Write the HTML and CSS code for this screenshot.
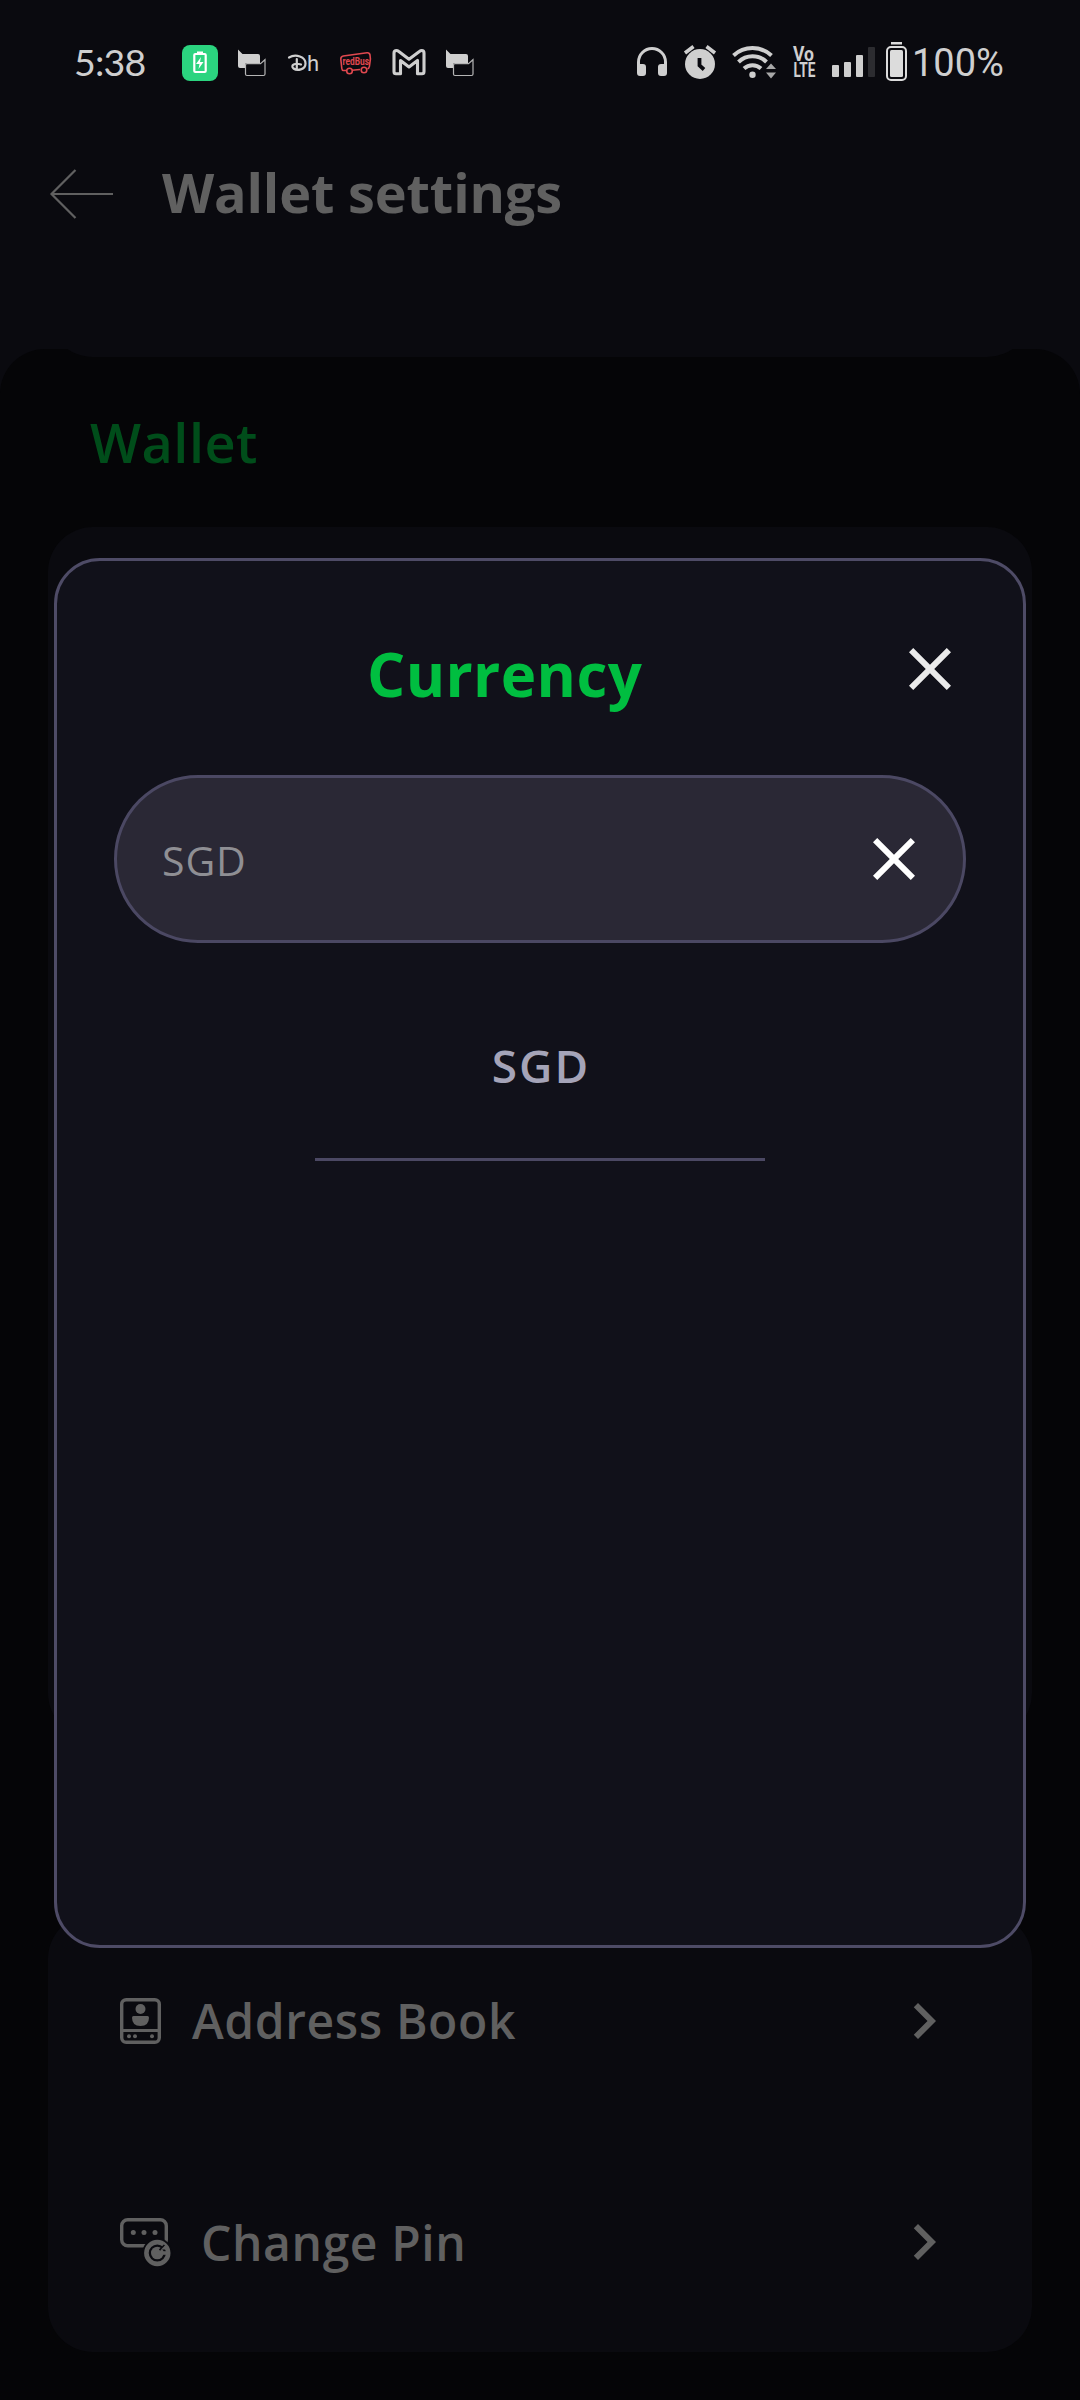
FILE: index.html
```html
<!DOCTYPE html>
<html lang="en">
<head>
<meta charset="utf-8">
<title>Wallet settings</title>
<link rel="stylesheet" href="styles.css">
</head>
<body>
<div class="screen">
  <div class="status">
    <span class="clock">5:38</span>
    <div class="status-left">
      <svg width="36" height="40" viewBox="0 0 36 40"><rect y="3" width="36" height="36" rx="8" fill="#2bd47f"/><rect x="12.300" y="12" width="11.400" height="18" rx="1" fill="none" stroke="#fff" stroke-width="2.200"/><rect x="15" y="9.500" width="6" height="3" fill="#fff"/><path d="M19 15l-5 7h3.500l-1 5 5-7H18z" fill="#fff"/></svg>
      <svg class="chat" width="28" height="40" viewBox="0 0 28 40"><path d="M0 7.500l4.500 4.500H20q2 0 2 2v7H9q-2 0-2 2v3H2q-2 0-2-2z" fill="#cfcfcf"/><path d="M9 21.700h13.500l4.500-4V32q0 1.500-1.500 1.500H9q-1.500 0-1.500-1.500v-9q0-1.300 1.500-1.300z" fill="#0a0a0f" stroke="#b5b5b5" stroke-width="1.200"/></svg>
      <svg width="32" height="40" viewBox="0 0 32 40"><path d="M1 15.500C8 11.500 17.500 15 17.500 21.500C17.500 28 9 29 5.500 26.500C2 23 7 20.500 13 22.500M8.800 17v11" fill="none" stroke="#cfcfcf" stroke-width="2.200" stroke-linecap="round"/><text x="19" y="28.800" class="logo-h">h</text></svg>
      <svg width="32" height="40" viewBox="0 0 32 40"><path d="M7 28.500H3.500q-1.500 0-1.700-2L.8 17q0-2.500 2.500-3L27 10.800q2.500-.3 3 2.200l.4 4-1 7.500q-.3 2-2 2.200M12 28.300l8-.8" fill="none" stroke="#e0484f" stroke-width="1.600"/><circle cx="9.500" cy="29" r="2.800" fill="none" stroke="#e0484f" stroke-width="1.600"/><circle cx="24" cy="28" r="2.800" fill="none" stroke="#e0484f" stroke-width="1.600"/><text x="2.500" y="22.500" class="logo-bus" textLength="26.500" lengthAdjust="spacingAndGlyphs">redBus</text></svg>
      <svg width="34" height="40" viewBox="0 0 34 40"><path d="M2 11V29.500q0 2.300 2 2.300h4.500V18.500L17 25l8.500-6.500v13.300H30q2 0 2-2.300V11q0-2.500-2.300-2.500-1 0-2 .8L17 17.200 6.500 9.300Q5.500 8.500 4.500 8.500 2 8.500 2 11z" fill="none" stroke="#cfcfcf" stroke-width="3.100" stroke-linejoin="round"/></svg>
      <svg class="chat" width="28" height="40" viewBox="0 0 28 40"><path d="M0 7.500l4.500 4.500H20q2 0 2 2v7H9q-2 0-2 2v3H2q-2 0-2-2z" fill="#cfcfcf"/><path d="M9 21.700h13.500l4.500-4V32q0 1.500-1.500 1.500H9q-1.500 0-1.500-1.500v-9q0-1.300 1.500-1.300z" fill="#0a0a0f" stroke="#b5b5b5" stroke-width="1.200"/></svg>
    </div>
    <div class="status-right">
      <svg width="30" height="40" viewBox="637 42 30 40"><path d="M638.500 68v-6a13.500 13.500 0 0 1 27 0v6" fill="none" stroke="#cfcfcf" stroke-width="3"/><path d="M637 64h6q3 0 3 3v6q0 3-3 3h-3q-3 0-3-3zM667 64h-6q-3 0-3 3v6q0 3 3 3h3q3 0 3-3z" fill="#cfcfcf"/></svg>
      <svg width="32" height="40" viewBox="684 42 32 40"><circle cx="700" cy="64" r="15" fill="#cfcfcf"/><path d="M685 53l8.500-6.500M715 53l-8.500-6.500" stroke="#cfcfcf" stroke-width="3.600"/><path d="M699.500 58v7.500l4.500 4" fill="none" stroke="#0a0a0f" stroke-width="3.800"/></svg>
      <svg width="44" height="40" viewBox="732 42 44 40"><g fill="none" stroke="#cfcfcf" stroke-width="4"><path d="M733.500 55.500a28 28 0 0 1 38 0"/><path d="M738.500 62a20 20 0 0 1 28 0"/><path d="M744 68.500a12.500 12.500 0 0 1 17 0"/></g><circle cx="752.500" cy="74.800" r="3.200" fill="#cfcfcf"/><path d="M766 69l5-5.500 5 5.500zM766 72.500h10l-5 6z" fill="#a8a8a8"/></svg>
      <svg width="23" height="40" viewBox="0 0 23 40"><text x="0" y="19.300" class="volte" textLength="21" lengthAdjust="spacingAndGlyphs">Vo</text><text x="0.500" y="35" class="volte" textLength="22" lengthAdjust="spacingAndGlyphs">LTE</text></svg>
      <svg width="43" height="40" viewBox="832 42 43 40"><g fill="#cfcfcf"><rect x="832" y="65" width="7" height="12" rx="1"/><rect x="844" y="62" width="7" height="15" rx="1"/><rect x="856" y="55" width="7" height="22" rx="1"/></g><rect x="868" y="47" width="7" height="30" rx="1" fill="#2c2c30"/></svg>
      <svg width="21" height="40" viewBox="0 0 21 40"><rect x="5" y="0" width="11" height="2.500" fill="#dcdcdc"/><rect x="1" y="5" width="19" height="33" rx="4" fill="none" stroke="#dcdcdc" stroke-width="2"/><rect x="4" y="8" width="13" height="27" rx="1.500" fill="#dcdcdc"/></svg>
    </div>
    <span class="percent">100%</span>
  </div>

  <header class="header">
    <svg width="64" height="50" viewBox="0 0 64 50" fill="none" stroke="#606060" stroke-width="2.200"><path d="M25.500 1L1.500 25l24 24M1.500 25H63"/></svg>
    <h1>Wallet settings</h1>
  </header>

  <main class="content">
    <div class="header-edge"></div>
    <h2>Wallet</h2>
    <section class="card card-general"></section>
    <section class="card card-security">
      <div class="row">
        <svg width="41" height="46" viewBox="0 0 41 46"><rect x="1.700" y="1.700" width="37.600" height="42.600" rx="4.500" fill="none" stroke="#606060" stroke-width="3.400"/><path d="M2 32.500h37" stroke="#606060" stroke-width="3"/><g fill="#606060"><circle cx="20.500" cy="11" r="5"/><path d="M12 19.500q0-1.500 1.500-1.500h14q1.500 0 1.500 1.500 0 8.500-8.500 8.500T12 19.500z"/><circle cx="9" cy="38.300" r="2"/><circle cx="15" cy="38.300" r="2"/><circle cx="32" cy="38.300" r="2"/></g></svg>
        <span class="address">Address Book</span>
        <svg class="chevron" width="72" height="72" viewBox="0 0 24 24"><path d="M10 6L8.590 7.410 13.170 12l-4.580 4.590L10 18l6-6z" fill="#606060"/></svg>
      </div>
      <div class="row">
        <svg width="51" height="50" viewBox="0 0 51 50"><rect x="1.700" y="2.700" width="44.600" height="26" rx="6" fill="none" stroke="#606060" stroke-width="3.400"/><g fill="#606060"><circle cx="13.300" cy="15.500" r="2.500"/><circle cx="24" cy="15.500" r="2.500"/><circle cx="35" cy="15.500" r="2.500"/></g><circle cx="37.300" cy="36" r="15" fill="#0a0a0f"/><circle cx="37.300" cy="36" r="10.900" fill="none" stroke="#606060" stroke-width="4.600"/><circle cx="37.300" cy="36" r="6.300" fill="#606060"/><path d="M37 36h12" stroke="#606060" stroke-width="3.600"/><path d="M39.500 33.200l5-5" stroke="#0a0a0f" stroke-width="1.800"/><path d="M41 32.500h5v-5z" fill="#606060"/></svg>
        <span class="pin">Change Pin</span>
        <svg class="chevron" width="72" height="72" viewBox="0 0 24 24"><path d="M10 6L8.590 7.410 13.170 12l-4.580 4.590L10 18l6-6z" fill="#606060"/></svg>
      </div>
    </section>
  </main>

  <div class="modal" role="dialog">
    <div class="modal-head">
      <h3>Currency</h3>
      <svg width="72" height="72" viewBox="0 0 24 24"><path d="M19 6.410L17.590 5 12 10.590 6.410 5 5 6.410 10.590 12 5 17.590 6.410 19 12 13.410 17.590 19 19 17.590 13.410 12z" fill="#ebebeb"/></svg>
    </div>
    <div class="search">
      <span>SGD</span>
      <svg width="72" height="72" viewBox="0 0 24 24"><path d="M19 6.410L17.590 5 12 10.590 6.410 5 5 6.410 10.590 12 5 17.590 6.410 19 12 13.410 17.590 19 19 17.590 13.410 12z" fill="#fff"/></svg>
    </div>
    <div class="option">SGD</div>
  </div>
</div>
</body>
</html>
```
FILE: styles.css
```css
* { box-sizing: border-box; }
body { margin: 0; background: #0a0a0f; font-family: "Open Sans", sans-serif; }
h1, h2, h3 { margin: 0; white-space: nowrap; }
svg { display: block; flex: none; overflow: visible; }

.screen { position: relative; width: 1080px; height: 2400px; overflow: hidden; display: flex; flex-direction: column; }

.status { display: flex; align-items: center; height: 124px; padding-left: 74px; color: #cfcfcf; font: 400 38px/40px Roboto, sans-serif; }
.clock { width: 108px; font-family: Lato, sans-serif; font-size: 37.5px; letter-spacing: -0.8px; }
.percent { padding-top: 1px; }
.status-left { display: flex; width: 455px; }
.status-left svg { margin-right: 20px; }
.status-left .chat { margin-right: 22px; }
.status-right { display: flex; width: 275px; }
.status-right svg { margin-right: 17px; }
.status-right svg:nth-child(2) { margin-right: 16px; }
.status-right svg:nth-child(4) { margin-right: 16px; }
.status-right svg:nth-child(5) { margin-right: 11px; }
.status-right svg:last-child { margin-right: 0; }
.logo-h { font: 400 22px Roboto, sans-serif; fill: #cfcfcf; }
.logo-bus { font: 700 10px Roboto, sans-serif; fill: #e0484f; }
.volte { font: 700 20.5px Roboto, sans-serif; fill: #cfcfcf; }

.header { display: flex; align-items: center; height: 140px; margin-bottom: 85px; padding-left: 50px; gap: 48px; }
.header h1 { padding-bottom: 4px; font-size: 54px; font-weight: 700; line-height: 74px; letter-spacing: -0.15px; color: #606060; }

.content { flex: 1; background: #050507; border-radius: 45px 45px 0 0; }
.header-edge { position: relative; height: 8px; margin: 0 48px; overflow: hidden; }
.header-edge::before { content: ""; position: absolute; inset: auto 0 0; height: 100px; border-radius: 0 0 45px 45px; background: #0a0a0f; }
.content h2 { padding: 48px 0 0 90px; height: 170px; font-size: 54px; font-weight: 600; line-height: 74px; letter-spacing: 0.5px; color: #004d1a; }
.card { margin: 0 48px; border-radius: 45px; background: #0a0a0f; }
.card-general { height: 1211px; }
.card-security { height: 438px; margin-top: 176px; padding: 0 72px; }
.row { display: flex; align-items: center; height: 225px; padding-top: 5px; color: #606060; font-size: 48px; font-weight: 600; line-height: 66px; letter-spacing: 0.6px; }
.row:first-child { height: 213px; padding-top: 0; }
.row span { padding-top: 1px; }
.address { margin-left: 31px; }
.pin { margin-left: 30px; }
.chevron { margin-left: auto; }

.modal { position: absolute; left: 54px; top: 558px; width: 972px; height: 1390px; padding: 72px 57px 0; border: 3px solid #4e4b66; border-radius: 46px; background: #11111a; }
.modal-head { display: flex; align-items: flex-start; justify-content: space-between; height: 142px; }
.modal-head h3 { margin-left: 253px; font-size: 60px; font-weight: 700; line-height: 82px; letter-spacing: 0.4px; color: #00be40; }
.search { display: flex; align-items: center; justify-content: space-between; height: 168px; padding: 0 33px 0 45px; border: 3px solid #4b4863; border-radius: 84px; background: #2a2835; color: #8f8f94; font-size: 41px; line-height: 56px; letter-spacing: 0.9px; }
.search span { padding-top: 2px; }
.option { width: 450px; height: 218px; margin: 0 auto; padding: 90px 0 0 2px; border-bottom: 3px solid #4b4863; text-align: center; color: #a5a4b8; font-size: 46px; font-weight: 600; line-height: 64px; letter-spacing: 2px; }
```
